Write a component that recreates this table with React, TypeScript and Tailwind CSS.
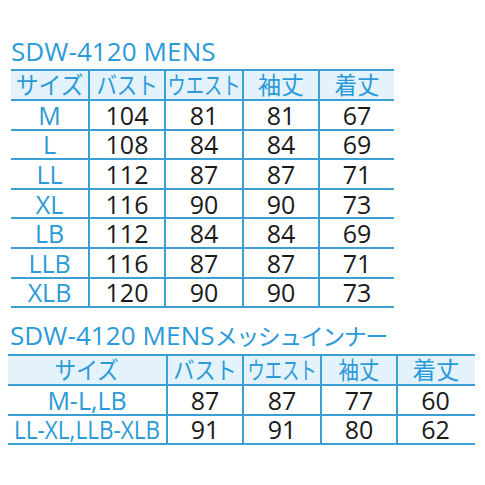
import React from "react";

const FONT = { fontFamily: '"Open Sans", "Noto Sans CJK JP", sans-serif' };

type Cell = { t: string; sx?: number };

function Row({
  cells,
  cols,
  header,
  h,
}: {
  cells: Cell[];
  cols: string;
  header?: boolean;
  h: string;
}) {
  return (
    <div
      className={`grid border-b-2 border-[#3b9fd3] ${header ? "bg-[#e3f2fb]" : ""} ${h}`}
      style={{ gridTemplateColumns: cols }}
    >
      {cells.map((c, i) => (
        <div
          key={i}
          className={`flex items-center justify-center whitespace-nowrap ${
            i > 0 ? "border-l-2 border-[#3b9fd3]" : ""
          } ${header || i === 0 ? "text-[#2a9ad8]" : "text-[#1a1a1a]"} ${
            header ? "text-[24px]" : "text-[25px]"
          }`}
        >
          <span
            className="inline-block leading-[26px]"
            style={c.sx ? { transform: `scaleX(${c.sx})` } : undefined}
          >
            {c.t}
          </span>
        </div>
      ))}
    </div>
  );
}

const t1 = [
  ["M", "104", "81", "81", "67"],
  ["L", "108", "84", "84", "69"],
  ["LL", "112", "87", "87", "71"],
  ["XL", "116", "90", "90", "73"],
  ["LB", "112", "84", "84", "69"],
  ["LLB", "116", "87", "87", "71"],
  ["XLB", "120", "90", "90", "73"],
];

const t2 = [
  ["M-L,LB", "87", "87", "77", "60"],
  ["LL-XL,LLB-XLB", "91", "91", "80", "62"],
];

export default function App() {
  const cols1 = "77px 76px 78px 76px 76px";
  const cols2 = "158px 76px 78px 76px 77px";
  return (
    <div className="w-[485px] h-[485px] bg-white relative overflow-hidden" style={FONT}>
      <div className="pl-[11px] pt-[35px]">
        <div className="text-[26px] leading-[32px] text-[#2a9ad8] tracking-[0.1px] h-[34px]">
          SDW-4120 MENS
        </div>
        <div className="w-[383px] border-t-2 border-[#3b9fd3]">
          <Row
            header
            h="h-[30px]"
            cols={cols1}
            cells={[
              { t: "サイズ", sx: 0.95 },
              { t: "バスト", sx: 0.85 },
              { t: "ウエスト", sx: 0.76 },
              { t: "袖丈", sx: 0.96 },
              { t: "着丈", sx: 0.94 },
            ]}
          />
          {t1.map((r, i) => (
            <Row key={i} h="h-[29.6px]" cols={cols1} cells={r.map((t) => ({ t }))} />
          ))}
        </div>
      </div>
      <div className="pl-[8px] pt-[11px]">
        <div className="text-[26px] leading-[32px] text-[#2a9ad8] tracking-[0.1px] h-[35px] pl-[2px] whitespace-nowrap">
          SDW-4120 MENS
          <span className="text-[23px] tracking-[-1.5px]">メッシュインナー</span>
        </div>
        <div className="w-[467px] border-t-2 border-[#3b9fd3]">
          <Row
            header
            h="h-[30px]"
            cols={cols2}
            cells={[
              { t: "サイズ", sx: 0.9 },
              { t: "バスト", sx: 0.88 },
              { t: "ウエスト", sx: 0.72 },
              { t: "袖丈", sx: 0.85 },
              { t: "着丈", sx: 0.98 },
            ]}
          />
          {t2.map((r, i) => (
            <Row
              key={i}
              h="h-[29.5px]"
              cols={cols2}
              cells={r.map((t, j) => ({ t, sx: j === 0 && i === 1 ? 0.9 : undefined }))}
            />
          ))}
        </div>
      </div>
    </div>
  );
}
